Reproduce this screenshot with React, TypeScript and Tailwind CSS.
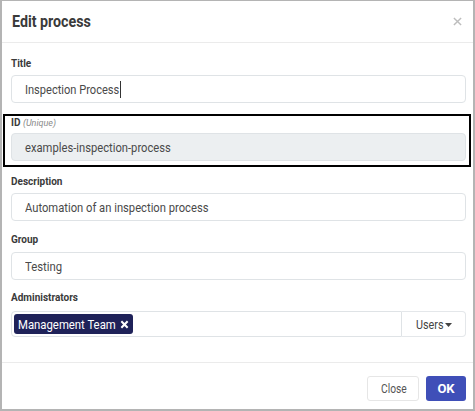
import React from "react";

const font = { fontFamily: "Roboto, 'Liberation Sans', sans-serif" };

function Label({ children, mb = "mb-[4px]" }: { children: React.ReactNode; mb?: string }) {
  return (
    <div className={`text-[10px] leading-[14px] font-bold text-[#3a3a3a] ${mb}`}>{children}</div>
  );
}

function Field({ children, gray }: { children: React.ReactNode; gray?: boolean }) {
  return (
    <div
      className={`h-[28px] rounded-[4px] border border-[#dfe3e6] flex items-center pl-[13px] text-[13.5px] text-[#4a4a4a] whitespace-nowrap ${
        gray ? "bg-[#eceff1]" : "bg-white"
      }`}
    >
      {children}
    </div>
  );
}

export default function App() {
  return (
    <div style={font} className="w-[475px] h-[411px] bg-white">
      <div className="w-[475px] h-[411px] border-2 border-t border-[#b4b4b4] flex flex-col">
        <div className="h-[42px] border-b border-[#ebebeb] flex items-center pl-[10px] pr-[10px] justify-between">
          <div className="text-[16px] font-bold text-[#3a3a3a] whitespace-nowrap">
            <span className="inline-block origin-left scale-x-[0.89]">Edit process</span>
          </div>
          <svg width="9" height="9" viewBox="0 0 10 10" className="mr-[1px]">
            <path d="M1 1L9 9M9 1L1 9" stroke="#bdbdbd" strokeWidth="1.6" />
          </svg>
        </div>
        <div className="pl-[9px] pr-[7px] pt-[14px] flex-1">
          <Label>Title</Label>
          <Field>
            <span className="inline-block w-[95px]">
              <span className="inline-block origin-left scale-x-[0.82]">Inspection Process</span>
            </span>
            <span className="inline-block w-[1px] h-[17px] bg-[#333]" />
          </Field>
          <div className="mt-[11px] ml-[-8px] mr-[-5px] border-2 border-black pl-[6px] pr-[3px] pb-[4px]">
            <div className="text-[10px] leading-[14px] font-bold text-[#3a3a3a] mb-[3px]">
              ID <span className="font-normal italic text-[#8a8a8a] text-[9px]">(Unique)</span>
            </div>
            <Field gray>
              <span className="inline-block origin-left scale-x-[0.83]">examples-inspection-process</span>
            </Field>
          </div>
          <div className="mt-[8px]">
            <Label>Description</Label>
            <Field>
              <span className="inline-block origin-left scale-x-[0.83]">Automation of an inspection process</span>
            </Field>
          </div>
          <div className="mt-[12px]">
            <Label mb="mb-[5px]">Group</Label>
            <Field>
              <span className="inline-block origin-left scale-x-[0.84]">Testing</span>
            </Field>
          </div>
          <div className="mt-[11px]">
            <Label mb="mb-[6px]">Administrators</Label>
            <div className="flex h-[26px]">
              <div className="flex-1 border border-[#dfe3e6] rounded-l-[4px] flex items-center pl-[2px]">
                <div className="h-[20px] w-[119px] bg-[#1f2259] rounded-[3px] flex items-center pl-[4px] text-white text-[13.5px] whitespace-nowrap">
                  <span className="inline-block w-[97px]">
                    <span className="inline-block origin-left scale-x-[0.84]">Management Team</span>
                  </span>
                  <svg width="9" height="9" viewBox="0 0 10 10" className="ml-[5px]">
                    <path d="M1.5 1.5L8.5 8.5M8.5 1.5L1.5 8.5" stroke="white" strokeWidth="2.3" />
                  </svg>
                </div>
              </div>
              <div className="w-[64px] border border-l-0 border-[#e4e7ea] rounded-r-[4px] flex items-center justify-center text-[13.5px] text-[#444] whitespace-nowrap">
                <span className="inline-block w-[27px]">
                  <span className="inline-block origin-left scale-x-[0.8]">Users</span>
                </span>
                <svg width="7" height="4" viewBox="0 0 7 4" className="ml-[2px] mt-[1px]">
                  <path d="M0 0H7L3.5 4Z" fill="#444" />
                </svg>
              </div>
            </div>
          </div>
        </div>
        <div className="h-[47px] border-t border-[#ebebeb] flex items-start justify-end pr-[7px] pt-[13px] gap-[7px]">
          <div className="h-[25px] w-[52px] border border-[#e6e6e6] rounded-[3px] flex items-center justify-center text-[13.5px] text-[#555] whitespace-nowrap">
            <span className="inline-block w-[25px]">
              <span className="inline-block origin-left scale-x-[0.76]">Close</span>
            </span>
          </div>
          <div className="h-[25px] w-[40px] bg-[#3f4fb8] rounded-[3px] flex items-center justify-center text-[13px] font-bold text-white">
            OK
          </div>
        </div>
      </div>
    </div>
  );
}
